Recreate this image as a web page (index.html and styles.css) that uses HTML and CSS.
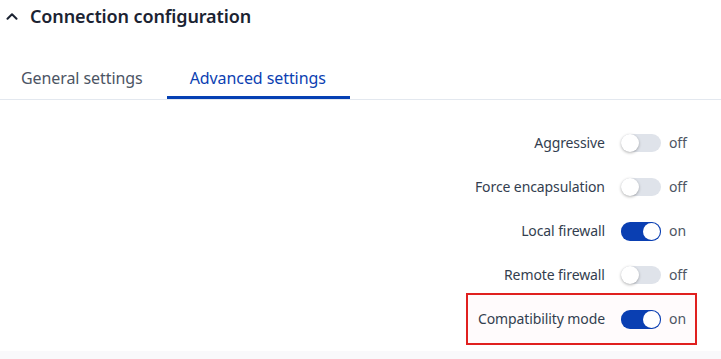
FILE: index.html
```html
<!DOCTYPE html>
<html lang="en">
<head>
    <meta charset="UTF-8">
    <meta name="viewport" content="width=device-width, initial-scale=1.0">
    <title>Connection configuration</title>
    <link rel="stylesheet" href="styles.css">
</head>
<body>
    <div class="section">
        <div class="section-header">
            <svg class="chevron" width="12" height="8" viewBox="0 0 12 8">
                <polyline points="1.5,6.8 6,2.2 10.5,6.8" fill="none" stroke="#1b2332" stroke-width="2" stroke-linecap="round" stroke-linejoin="round"></polyline>
            </svg>
            <h2>Connection configuration</h2>
        </div>

        <div class="tabs">
            <div class="tab">General settings</div>
            <div class="tab active">Advanced settings</div>
        </div>

        <div class="settings">
            <div class="row">
                <div class="field">
                    <span class="label">Aggressive</span>
                    <span class="switch"></span>
                    <span class="state">off</span>
                </div>
            </div>
            <div class="row">
                <div class="field">
                    <span class="label">Force encapsulation</span>
                    <span class="switch"></span>
                    <span class="state">off</span>
                </div>
            </div>
            <div class="row">
                <div class="field">
                    <span class="label">Local firewall</span>
                    <span class="switch on"></span>
                    <span class="state">on</span>
                </div>
            </div>
            <div class="row">
                <div class="field">
                    <span class="label">Remote firewall</span>
                    <span class="switch"></span>
                    <span class="state">off</span>
                </div>
            </div>
            <div class="row">
                <div class="field highlight">
                    <span class="label">Compatibility mode</span>
                    <span class="switch on"></span>
                    <span class="state">on</span>
                </div>
            </div>
        </div>
    </div>
    <div class="page-bottom"></div>
</body>
</html>
```

FILE: styles.css
```css
body {
    font-family: 'Noto Sans', 'Open Sans', sans-serif;
    margin: 0;
    padding: 0;
    background-color: #ffffff;
    color: #333e4f;
}

.section {
    background: #ffffff;
}

.section-header {
    display: flex;
    align-items: center;
    gap: 12px;
    padding: 4px 0 0 6px;
}

.section-header h2 {
    margin: 0;
    font-size: 18px;
    line-height: 24px;
    font-weight: 600;
    letter-spacing: -0.12px;
    color: #1b2332;
}

.chevron {
    display: block;
}

.tabs {
    display: flex;
    margin-top: 27px;
    border-bottom: 1px solid #e3e8ef;
}

.tab {
    padding: 12px 24px 7px 21px;
    font-size: 16px;
    line-height: 22px;
    letter-spacing: -0.08px;
    color: #4c5564;
    border-bottom: 3px solid transparent;
}

.tab.active {
    padding-left: 23px;
    color: #0c3fb2;
    border-bottom-color: #0540b4;
}

.settings {
    padding: 21px 24px 10px 0;
}

.row {
    display: flex;
    justify-content: flex-end;
    align-items: center;
    height: 44px;
}

.field {
    display: flex;
    align-items: center;
    padding: 14px 8px 14px 10px;
    border: 2px solid transparent;
    font-size: 14px;
    line-height: 20px;
}

.field.highlight {
    border-color: #e0201f;
    background-color: #fffbfc;
}

.label {
    letter-spacing: -0.1px;
    color: #333e4f;
}

.switch {
    position: relative;
    width: 40px;
    height: 18px;
    margin: 0 8px 0 16px;
    border-radius: 9px;
    background-color: #dfe3ea;
}

.switch::after {
    content: "";
    position: absolute;
    top: 0;
    left: 0;
    width: 18px;
    height: 18px;
    border-radius: 50%;
    background: #ffffff;
    box-shadow: 0 1px 3px rgba(0, 0, 0, 0.3);
}

.switch.on {
    height: 19px;
    background-color: #0a3fb2;
}

.switch.on::after {
    top: 1px;
    left: 22px;
    width: 17px;
    height: 17px;
    box-shadow: none;
}

.state {
    min-width: 18px;
    color: #4d5663;
}

.page-bottom {
    height: 8px;
    background-color: #f9f9fb;
}
```
